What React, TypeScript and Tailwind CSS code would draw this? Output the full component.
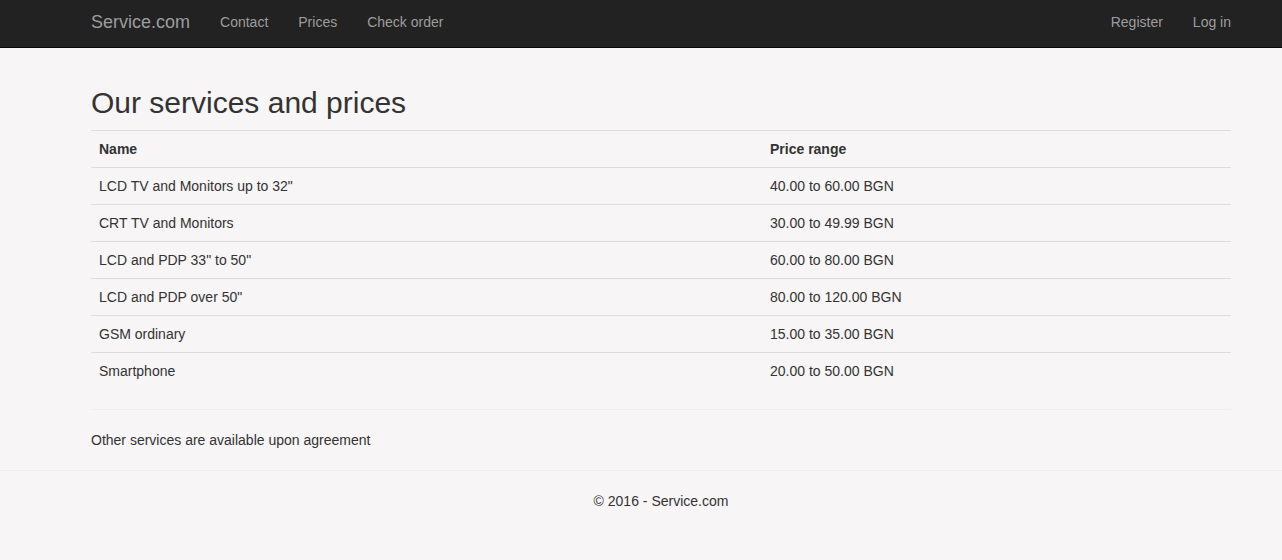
import React from 'react';

const services = [
    { name: 'LCD TV and Monitors up to 32"', price: '40.00 to 60.00 BGN' },
    { name: 'CRT TV and Monitors', price: '30.00 to 49.99 BGN' },
    { name: 'LCD and PDP 33" to 50"', price: '60.00 to 80.00 BGN' },
    { name: 'LCD and PDP over 50"', price: '80.00 to 120.00 BGN' },
    { name: 'GSM ordinary', price: '15.00 to 35.00 BGN' },
    { name: 'Smartphone', price: '20.00 to 50.00 BGN' },
];

const App: React.FC = () => {
    return (
        <div className="min-h-[560px] bg-[#f7f5f5] text-[#333] text-[14px] leading-5 font-['Liberation_Sans',Arial,sans-serif]">
            {/* Navbar */}
            <nav className="h-[48px] bg-[#222] border-b border-[#080808]">
                <div className="ml-[91px] w-[1140px] flex justify-between">
                    <div className="flex">
                        <a className="text-[18px] leading-5 pt-[12px] text-[#9d9d9d] pr-[15px]">Service.com</a>
                        <ul className="flex">
                            <li><a className="block px-[15px] pt-[12px] text-[#9d9d9d]">Contact</a></li>
                            <li><a className="block px-[15px] pt-[12px] text-[#9d9d9d]">Prices</a></li>
                            <li><a className="block px-[15px] pt-[12px] text-[#9d9d9d]">Check order</a></li>
                        </ul>
                    </div>
                    <ul className="flex">
                        <li><a className="block px-[15px] pt-[12px] text-[#9d9d9d]">Register</a></li>
                        <li><a className="block pl-[15px] pt-[12px] text-[#9d9d9d]">Log in</a></li>
                    </ul>
                </div>
            </nav>

            {/* Content */}
            <main className="ml-[91px] w-[1140px] pt-[38px]">
                <h2 className="text-[30px] leading-[33px] font-normal mb-[11px]">Our services and prices</h2>
                <table className="w-full border-collapse">
                    <thead>
                        <tr className="border-t border-[#ddd]">
                            <th className="w-[671px] text-left font-bold px-2 py-2">Name</th>
                            <th className="text-left font-bold px-2 py-2">Price range</th>
                        </tr>
                    </thead>
                    <tbody>
                        {services.map((s, i) => (
                            <tr key={i} className="border-t border-[#ddd]">
                                <td className="px-2 py-2">{s.name}</td>
                                <td className="px-2 py-2">{s.price}</td>
                            </tr>
                        ))}
                    </tbody>
                </table>
                <hr className="mt-[20px] border-t border-[#eee]" />
                <p className="mt-[20px]">Other services are available upon agreement</p>
            </main>

            {/* Footer */}
            <hr className="mt-[20px] border-t border-[#eee]" />
            <footer className="ml-[91px] w-[1140px] text-center pt-[20px]">
                © 2016 - Service.com
            </footer>
        </div>
    );
};

export default App;
